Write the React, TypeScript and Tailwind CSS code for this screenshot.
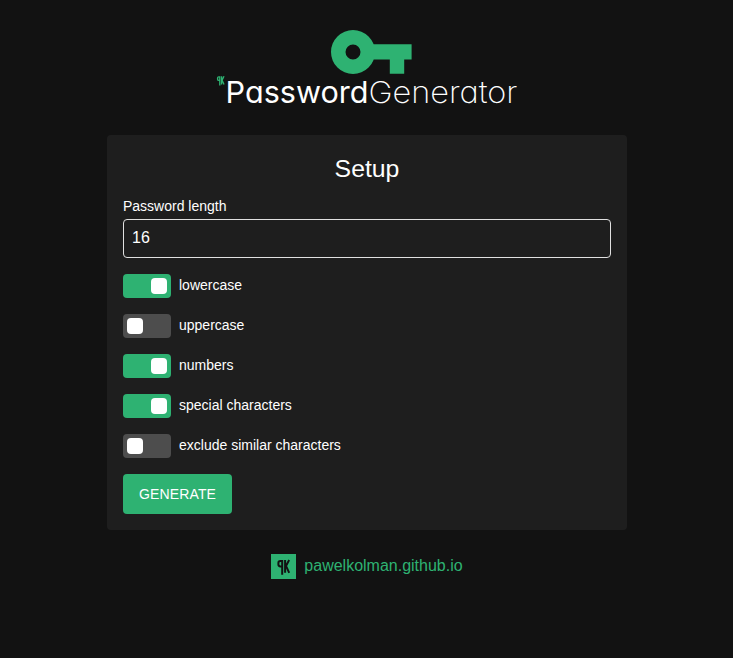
import React, { useState } from "react";

function Monogram({ className }: { className: string }) {
  return (
    <svg className={className} viewBox="0 0 13 16" fill="none" stroke="currentColor" strokeWidth="2">
      <path d="M5.2 7.4H3.4Q1.4 7.4 1.4 5.6V3.8Q1.4 2 3.4 2H5.2V15.8" />
      <path d="M8.1 1V13.8M12.2 1L9 6.9L12.2 13.8" />
    </svg>
  );
}

function Logo() {
  return (
    <svg className="block h-[87px] w-[306px]" viewBox="214 29 306 87">
      <g fill="#2eb272">
        <path
          fillRule="evenodd"
          d="M353 30a22 22 0 1 0 0 44a22 22 0 0 0 0-44ZM353 44.5a7.5 7.5 0 1 1 0 15a7.5 7.5 0 0 1 0-15Z"
        />
        <path d="M373 44.3H411.6V59.4H404.2V73.7H389.8V59.4H373Z" />
      </g>
      <g stroke="#2eb272" fill="none" strokeWidth="1.35">
        <path d="M219.8 80.4H218.8Q217.6 80.4 217.6 79.2V78Q217.6 76.8 218.8 76.8H219.8V85.6" />
        <path d="M221.6 76.2V84.6M224 76.2L222.1 80.2L224 84.6" />
      </g>
      <g fill="#fff" className="font-['Inter',sans-serif] [font-feature-settings:'cv11']" fontSize="30">
        <text x="225.6" y="102.6" fontWeight="400" textLength="143" lengthAdjust="spacingAndGlyphs">
          Password
        </text>
        <text x="368.4" y="102.6" fontWeight="200" textLength="149" lengthAdjust="spacingAndGlyphs">
          Generator
        </text>
      </g>
    </svg>
  );
}

function Toggle({ label, initial }: { label: string; initial: boolean }) {
  const [on, setOn] = useState(initial);
  return (
    <button type="button" onClick={() => setOn(!on)} className="flex h-6 items-center gap-2 text-left">
      <span className={`flex h-6 w-12 rounded p-1 ${on ? "justify-end bg-[#2eb272]" : "justify-start bg-[#4d4d4d]"}`}>
        <span className="size-4 rounded bg-white" />
      </span>
      <span className="-mt-0.5 text-sm">{label}</span>
    </button>
  );
}

const options = [
  { label: "lowercase", initial: true },
  { label: "uppercase", initial: false },
  { label: "numbers", initial: true },
  { label: "special characters", initial: true },
  { label: "exclude similar characters", initial: false },
];

export default function App() {
  return (
    <div className="flex min-h-screen flex-col items-center bg-[#121212] pt-[29px] pl-px font-['Liberation_Sans',Arial,sans-serif] text-white">
      <Logo />
      <main className="mt-[19px] flex h-[395px] w-[520px] flex-col items-start rounded bg-[#1e1e1e] px-4 pt-4">
        <h1 className="w-full text-center text-[24.8px] leading-[35px]">Setup</h1>
        <label htmlFor="length" className="mt-2.5 text-sm leading-5">
          Password length
        </label>
        <input
          id="length"
          defaultValue="16"
          className="mt-[3px] h-[39px] w-full rounded border border-[#e0e0e0] bg-transparent px-2 pb-0.5 text-base outline-none"
        />
        <div className="mt-4 flex flex-col gap-4">
          {options.map((o) => (
            <Toggle key={o.label} {...o} />
          ))}
        </div>
        <button type="button" className="mt-4 h-10 w-[109px] rounded bg-[#2eb272] text-sm tracking-[0.15px]">
          GENERATE
        </button>
      </main>
      <a className="mt-6 flex items-center gap-2 text-base text-[#2eb272]">
        <span className="flex size-[25px] items-center justify-center bg-[#2eb272] text-[#121212]">
          <Monogram className="h-4 w-[13px]" />
        </span>
        <span className="-mt-0.5">pawelkolman.github.io</span>
      </a>
    </div>
  );
}
